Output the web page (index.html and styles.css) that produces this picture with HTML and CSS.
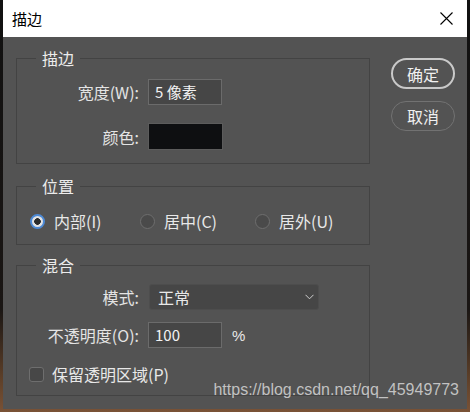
FILE: index.html
```html
<!DOCTYPE html>
<html lang="zh-CN">
<head>
  <meta charset="UTF-8" />
  <title>描边</title>
  <link rel="stylesheet" href="styles.css">
</head>
<body>

  <div class="dialog">
    <div class="titlebar">
      <span class="title">描边</span>
      <svg class="close" width="13" height="13" viewBox="0 0 13 13">
        <path d="M0.5 0.5 L12.5 12.5 M12.5 0.5 L0.5 12.5" stroke="#000" stroke-width="1.1" fill="none" />
      </svg>
    </div>

    <div class="main">
      <div class="groups">
        <fieldset class="group stroke">
          <legend>描边</legend>
          <div class="form-grid">
            <label class="label">宽度(W):</label>
            <div class="field">5 像素</div>
            <label class="label">颜色:</label>
            <div class="swatch"></div>
          </div>
        </fieldset>

        <fieldset class="group position">
          <legend>位置</legend>
          <div class="radios">
            <div class="radio-item"><span class="radio checked"></span>内部(I)</div>
            <div class="radio-item"><span class="radio"></span>居中(C)</div>
            <div class="radio-item"><span class="radio"></span>居外(U)</div>
          </div>
        </fieldset>

        <fieldset class="group blend">
          <legend>混合</legend>
          <div class="form-grid blend-grid">
            <label class="label">模式:</label>
            <div class="select">
              <span>正常</span>
              <svg width="9" height="6" viewBox="0 0 9 6">
                <path d="M0.5 0.8 L4.5 4.8 L8.5 0.8" stroke="#cfcfcf" stroke-width="1" fill="none" />
              </svg>
            </div>
            <label class="label">不透明度(O):</label>
            <div class="opacity">
              <div class="field">100</div>
              <span>%</span>
            </div>
          </div>
          <div class="check-row"><span class="checkbox"></span>保留透明区域(P)</div>
        </fieldset>
      </div>

      <div class="buttons">
        <button class="btn primary">确定</button>
        <button class="btn">取消</button>
      </div>
    </div>
  </div>

  <div class="watermark">https://blog.csdn.net/qq_45949773</div>

</body>
</html>
```

FILE: styles.css
```css
html, body {
  margin: 0;
}

body {
  width: 470px;
  height: 412px;
  box-sizing: border-box;
  padding: 0 3px 3px 3px;
  background: linear-gradient(#111 0, #1a1614 75%, #5e4029 92%, #7a5236 100%);
  font-family: "Noto Sans CJK SC", sans-serif;
  position: relative;
  overflow: hidden;
}

.dialog {
  height: 100%;
  background: #535353;
  display: flex;
  flex-direction: column;
}

.titlebar {
  height: 37px;
  background: #fff;
  display: flex;
  align-items: center;
  justify-content: space-between;
  padding: 0 14px 0 9px;
  flex-shrink: 0;
}

.title {
  font-size: 15px;
  color: #000;
  line-height: 20px;
}

.main {
  display: flex;
  padding: 11px 0 0 13px;
  color: #e8e8e8;
  font-size: 16px;
}

.groups {
  width: 354px;
}

.group {
  border: 1px solid #434343;
  margin: 0;
  padding: 0 0 0 13px;
  min-width: 0;
}

.group legend {
  padding: 0 6px;
  margin-left: 6px;
  font-size: 16px;
  line-height: 20px;
  color: #ececec;
}

.stroke {
  padding-top: 11px;
  padding-bottom: 13px;
}

.position {
  margin-top: 12px;
  padding-top: 15px;
  padding-bottom: 13px;
}

.blend {
  margin-top: 10px;
  padding-top: 9px;
  padding-bottom: 11px;
}

.form-grid {
  display: grid;
  grid-template-columns: 109px auto;
  column-gap: 9px;
  row-gap: 18px;
  align-items: center;
  justify-items: start;
}

.blend-grid {
  row-gap: 12px;
}

.label {
  justify-self: end;
  line-height: 20px;
  color: #e4e4e4;
}

.field {
  width: 74px;
  height: 26px;
  box-sizing: border-box;
  background: #464646;
  border: 1px solid #6b6b6b;
  padding-left: 6px;
  font-size: 15px;
  line-height: 24px;
  color: #f2f2f2;
}

.swatch {
  width: 75px;
  height: 27px;
  box-sizing: border-box;
  background: #0e0f11;
  border: 1px solid #5c5c5c;
}

.radios {
  display: grid;
  grid-template-columns: 110px 115px auto;
  height: 20px;
  align-items: center;
}

.radio-item {
  display: flex;
  align-items: center;
  gap: 9px;
  line-height: 20px;
}

.radio {
  width: 15px;
  height: 15px;
  box-sizing: border-box;
  border-radius: 50%;
  border: 1px solid #6e6e6e;
  background: #4a4a4a;
}

.radio.checked {
  border: 2px solid #4d8ad6;
  background: radial-gradient(circle, #2a2a2a 0 3px, #e2e2e2 3.6px);
}

.select {
  width: 170px;
  height: 26px;
  box-sizing: border-box;
  margin-left: 1px;
  background: #464646;
  border: 1px solid #4d4d4d;
  border-radius: 3px;
  display: flex;
  align-items: center;
  justify-content: space-between;
  padding: 0 4px 0 8px;
  font-size: 16px;
}

.opacity {
  display: flex;
  align-items: center;
  gap: 10px;
}

.opacity span {
  font-family: "Liberation Sans", sans-serif;
  font-size: 15px;
}

.check-row {
  display: flex;
  align-items: center;
  gap: 8px;
  height: 20px;
  margin-top: 16px;
  margin-left: -1px;
  line-height: 20px;
}

.checkbox {
  width: 15px;
  height: 15px;
  box-sizing: border-box;
  border: 1px solid #6e6e6e;
  border-radius: 3px;
  background: #474747;
}

.buttons {
  display: flex;
  flex-direction: column;
  margin: 10px 0 0 21px;
}

.btn {
  width: 64px;
  height: 30px;
  border-radius: 16px;
  border: 1px solid #727272;
  background: transparent;
  color: #f0f0f0;
  font-family: "Noto Sans CJK SC", sans-serif;
  font-size: 16px;
  line-height: 20px;
  padding: 0;
  margin-top: 12px;
}

.btn.primary {
  height: 31px;
  border: 2px solid #c9c9c9;
  margin-top: 0;
}

.watermark {
  position: absolute;
  top: 381px;
  right: 11px;
  font-family: "Liberation Sans", sans-serif;
  font-size: 16px;
  line-height: 18px;
  color: rgba(215, 215, 215, 0.85);
}
```
